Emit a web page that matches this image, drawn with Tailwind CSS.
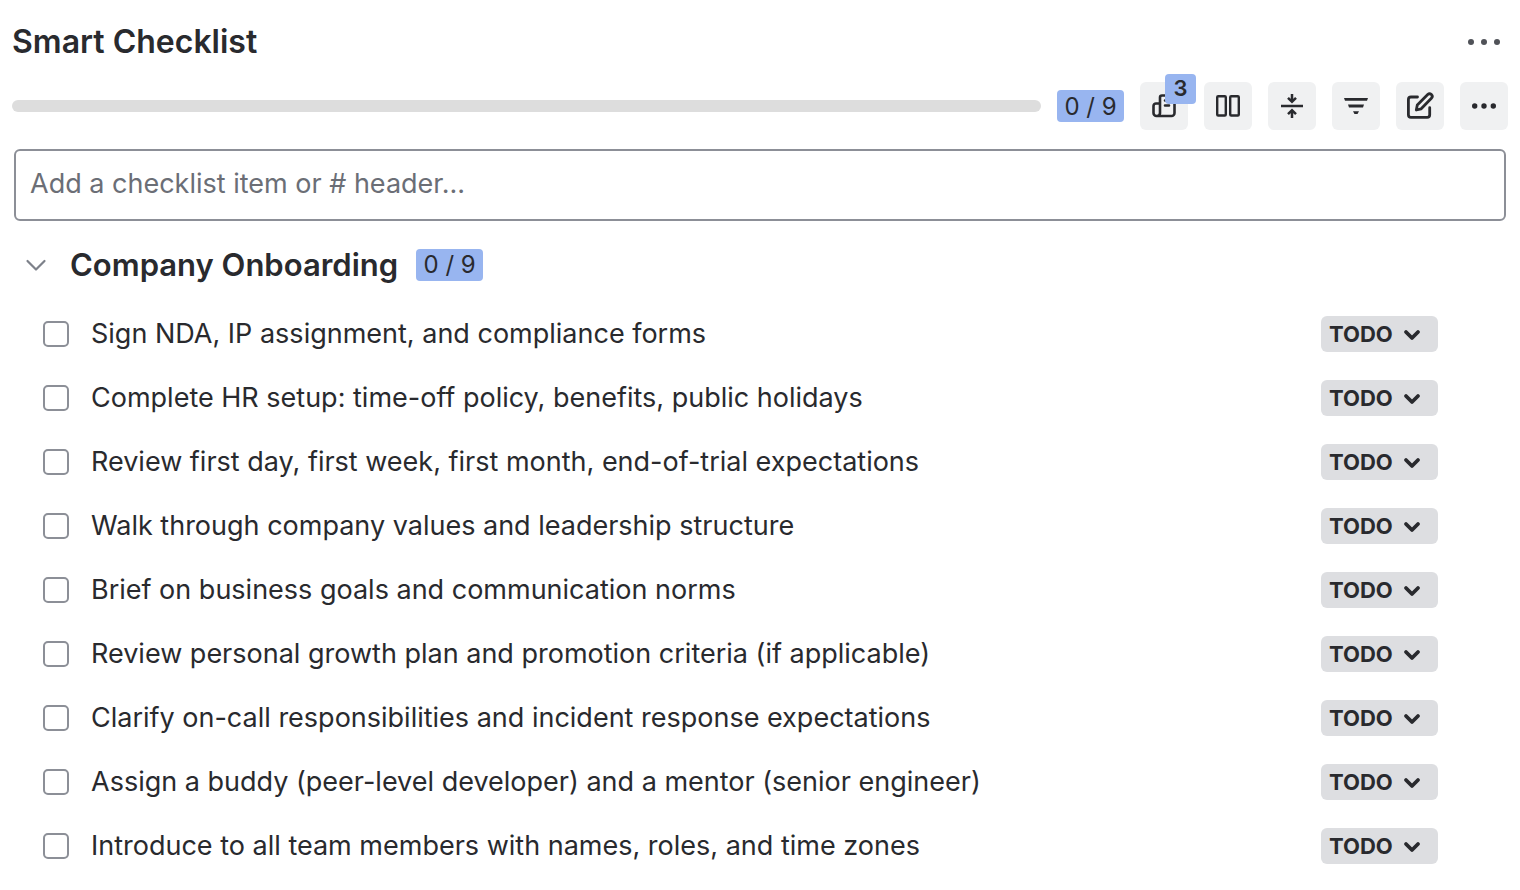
<!DOCTYPE html>
<html lang="en">
<head>
  <meta charset="UTF-8">
  <meta name="viewport" content="width=device-width, initial-scale=1.0">
  <title>Smart Checklist</title>
  <script src="https://cdn.jsdelivr.net/npm/@tailwindcss/browser@4"></script>
</head>
<body class="bg-white text-[#292a2e] font-['Inter',sans-serif]">
  <main class="px-3 pt-4">
    <!-- Title -->
    <header class="flex items-center justify-between h-13">
      <h1 class="text-[32px] leading-10 font-semibold">Smart Checklist</h1>
      <button type="button" aria-label="Panel menu" class="size-12 flex items-center justify-center text-[#505258]">
        <svg class="w-9 h-8" viewBox="0 0 36 32" fill="currentColor"><circle cx="5" cy="16" r="3"/><circle cx="18" cy="16" r="3"/><circle cx="31" cy="16" r="3"/></svg>
      </button>
    </header>

    <!-- Progress and toolbar -->
    <div class="flex items-center gap-4 mt-[14px]">
      <div role="progressbar" aria-label="Progress" aria-valuenow="0" aria-valuemin="0" aria-valuemax="9" class="flex-1 h-3 rounded-full bg-[#dddddd]"></div>
      <span class="w-[67px] h-8 rounded bg-[#98b5f0] text-2xl leading-[34px] text-center">0 / 9</span>
      <button type="button" aria-label="Templates" class="relative size-12 rounded-md bg-[#f0f1f2] flex items-center justify-center">
        <svg class="size-8" viewBox="0 0 32 32" fill="none" stroke="currentColor" stroke-width="2.6" stroke-linejoin="round" stroke-linecap="round"><path d="M12 23.500V7.500a2 2 0 0 1 2-2H24.500a2 2 0 0 1 2 2V23a3 3 0 0 1-3 3H8.500a3 3 0 0 1-3-3V16a2.500 2.500 0 0 1 2.500-2.500h4M12 23a3 3 0 0 1-3 3M17 10.500h4M17 15.500h4"/></svg>
        <span class="absolute -top-2 left-[25px] w-[31px] h-[30px] rounded bg-[#98b5f0] text-[22px] leading-7 font-semibold text-center">3</span>
      </button>
      <button type="button" aria-label="Columns" class="size-12 rounded-md bg-[#f0f1f2] flex items-center justify-center">
        <svg class="size-8" viewBox="0 0 32 32" fill="none" stroke="currentColor" stroke-width="2.4"><rect x="5.200" y="6.200" width="8.600" height="19.300" rx="1"/><rect x="18.200" y="6.200" width="8.600" height="19.300" rx="1"/></svg>
      </button>
      <button type="button" aria-label="Collapse all" class="size-12 rounded-md bg-[#f0f1f2] flex items-center justify-center">
        <svg class="size-8" viewBox="0 0 32 32" fill="none" stroke="currentColor" stroke-width="2.5"><path d="M5 16h22M16 4v7.500M12 7.800l4 4 4-4M16 28v-7.500M12 24.200l4-4 4 4"/></svg>
      </button>
      <button type="button" aria-label="Filter" class="size-12 rounded-md bg-[#f0f1f2] flex items-center justify-center">
        <svg class="size-8" viewBox="0 0 32 32" fill="currentColor"><path d="M4 8h24l-1 2.800h-22zM8 14.600h16l-1 2.800h-14zM13 21.200h6l-1.500 2.800h-3z"/></svg>
      </button>
      <button type="button" aria-label="Edit" class="size-12 rounded-md bg-[#f0f1f2] flex items-center justify-center">
        <svg class="size-8" viewBox="0 0 32 32" fill="none" stroke="currentColor" stroke-width="2.800" stroke-linecap="round" stroke-linejoin="round"><path d="M13.500 7H7a2.600 2.600 0 0 0-2.600 2.600V24.700a2.600 2.600 0 0 0 2.600 2.600h16.100a2.600 2.600 0 0 0 2.600-2.600v-7M12.300 20l1-5L23.700 4.600a2.600 2.600 0 0 1 3.700 3.700L17.200 18.800z"/></svg>
      </button>
      <button type="button" aria-label="More" class="size-12 rounded-md bg-[#f0f1f2] flex items-center justify-center">
        <svg class="size-8" viewBox="0 0 32 32" fill="currentColor"><circle cx="6.700" cy="16" r="2.700"/><circle cx="16" cy="16" r="2.700"/><circle cx="25.300" cy="16" r="2.700"/></svg>
      </button>
    </div>

    <!-- New item -->
    <div class="mt-[19px] px-[2px]">
      <input type="text" aria-label="New checklist item" placeholder="Add a checklist item or # header..." class="block w-full h-18 px-[14px] pb-1 border-2 border-[#8c8f97] rounded-md text-[27px] placeholder:text-[#6b6e76]">
    </div>

    <!-- Section header -->
    <div class="flex items-center h-12 mt-5 pl-2">
      <button type="button" aria-label="Collapse section" class="size-8 mr-[18px]">
        <svg class="size-8" viewBox="0 0 32 32" fill="none" stroke="#7d818a" stroke-width="2.200" stroke-linecap="round" stroke-linejoin="round"><path d="M7.500 12l8.500 8.500L24.500 12"/></svg>
      </button>
      <h2 class="text-[31px] leading-10 font-semibold">Company Onboarding</h2>
      <span class="ml-[18px] w-[67px] h-8 rounded bg-[#98b5f0] text-2xl leading-8 text-center">0 / 9</span>
    </div>

    <ul id="items" class="mt-[13px] pl-[31px] pr-[70px]"></ul>
  </main>

  <script>
    const items = [
      'Sign NDA, IP assignment, and compliance forms',
      'Complete HR setup: time-off policy, benefits, public holidays',
      'Review first day, first week, first month, end-of-trial expectations',
      'Walk through company values and leadership structure',
      'Brief on business goals and communication norms',
      'Review personal growth plan and promotion criteria (if applicable)',
      'Clarify on-call responsibilities and incident response expectations',
      'Assign a buddy (peer-level developer) and a mentor (senior engineer)',
      'Introduce to all team members with names, roles, and time zones'
    ];

    document.getElementById('items').innerHTML = items.map((text, i) => `
      <li class="flex items-center h-16">
        <input type="checkbox" id="item-${i}" class="appearance-none shrink-0 size-[26px] border-2 border-[#8c8f97] rounded-[5px] checked:bg-[#98b5f0]">
        <label for="item-${i}" class="flex-1 pl-[22px] text-[27px] leading-9">${text}</label>
        <div class="relative shrink-0">
          <select aria-label="Status of: ${text}" class="block appearance-none w-[117px] h-9 pl-2 rounded-md bg-[#dddee1] text-[22px] leading-9 font-bold">
            <option>TODO</option>
            <option>DONE</option>
          </select>
          <svg class="absolute right-4 top-2 size-5 pointer-events-none" viewBox="0 0 20 20" fill="none" stroke="currentColor" stroke-width="3.800" stroke-linecap="round" stroke-linejoin="round"><path d="M4 8l6 6 6-6"/></svg>
        </div>
      </li>`).join('');
  </script>
</body>
</html>
